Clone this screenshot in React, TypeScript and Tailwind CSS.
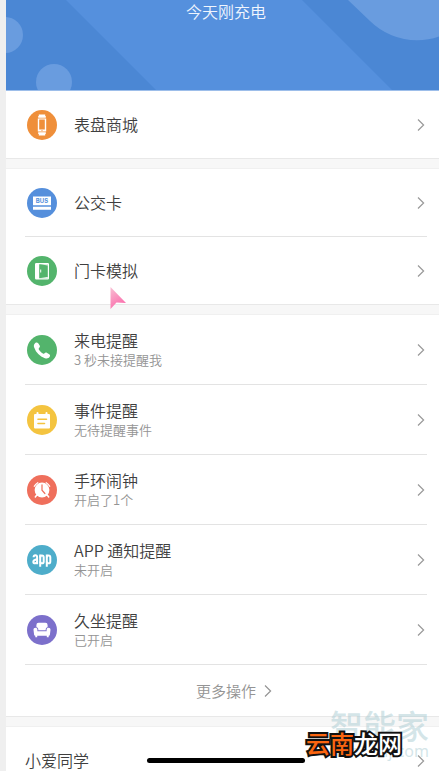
import type { ReactNode } from "react";

function Chevron({ className = "" }: { className?: string }) {
  return (
    <svg viewBox="0 0 8 14" className={`h-3.5 w-2 shrink-0 ${className}`} fill="none" stroke="currentColor" strokeWidth="1.2" aria-hidden="true">
      <path d="M1 1.5 6.6 7 1 12.5" />
    </svg>
  );
}

function Badge({ color, children }: { color: string; children: ReactNode }) {
  return (
    <svg viewBox="0 0 30 30" className={`size-[30px] shrink-0 rounded-full ${color}`} fill="#fff" aria-hidden="true">
      {children}
    </svg>
  );
}

const icons = {
  watch: (
    <Badge color="bg-[#ef8f3a]">
      <path d="M11.8 4.6h6.4V6h.6v1.8h-7.6V6h.6zM11.2 22.2h7.6V24h-.6v1.4h-6.400V24h-.6z" />
      <path d="M10.800 8.400h8.400v13.200h-8.400zM12.200 9.400v10.200h5.600V9.400z" fillRule="evenodd" />
      <circle cx="15" cy="20.600" r=".6" fill="#ef8f3a" />
    </Badge>
  ),
  bus: (
    <Badge color="bg-[#558fdc]">
      <path d="M6 8.400h18v8.800H6zM6 18.800h18v3H6z" />
      <text x="15" y="15.200" textAnchor="middle" fontSize="6" fontWeight="700" fill="#558fdc" fontFamily="Inter, sans-serif">BUS</text>
    </Badge>
  ),
  door: (
    <Badge color="bg-[#53b46c]">
      <path d="M9.200 7h11.600a1.200 1.200 0 0 1 1.200 1.200v14a1.200 1.200 0 0 1-1.200 1.200H9.200A1.200 1.200 0 0 1 8 22.200v-14A1.200 1.200 0 0 1 9.200 7zM12.200 8.200v14h8.600v-14z" fillRule="evenodd" />
      <path d="M12.200 8.200h1.500l7.100 1.300v-1.300h-8.600zM12.200 22.200l8.600-1.200v1.200z" />
      <path d="M13.200 13.400h1v3.200h-1z" />
    </Badge>
  ),
  phone: (
    <Badge color="bg-[#53b46c]">
      <path d="M8.300 7.900c1.100-.8 2.200-.6 2.900.4l1.500 2.300c.5.900.2 1.700-.6 2.400-.6.500-.6 1-.2 1.600 1 1.700 2.300 3 4 4 .6.400 1.100.3 1.600-.3.700-.8 1.500-1 2.300-.5l2.400 1.500c1 .7 1.100 1.700.3 2.800-1.100 1.400-2.600 1.800-4.600 1.100-5.300-1.900-8.800-5.400-10.700-10.700-.7-2-.3-3.500 1.100-4.600z" />
    </Badge>
  ),
  event: (
    <Badge color="bg-[#f4c440]">
      <rect x="7" y="9" width="16" height="14.500" rx="1" />
      <rect x="9.500" y="7" width="2" height="4" rx="1" />
      <rect x="18.500" y="7" width="2" height="4" rx="1" />
      <path d="M11 14.300h8.500M11 18.500h6.500" stroke="#f4c440" strokeWidth="1.600" strokeLinecap="round" />
    </Badge>
  ),
  alarm: (
    <Badge color="bg-[#ef6f5c]">
      <circle cx="15" cy="15" r="7.400" />
      <path d="M7.300 11.300A9 9 0 0 1 10.800 7.700M22.700 11.300A9 9 0 0 0 19.200 7.700" stroke="#fff" strokeWidth="1.300" fill="none" strokeLinecap="round" />
      <path d="m9.800 20-1.500 2M20.200 20l1.500 2" stroke="#fff" strokeWidth="1.500" strokeLinecap="round" />
      <path d="M15 9.800v5.400l2.900 3.300" stroke="#ef6f5c" strokeWidth="1.200" fill="none" strokeLinecap="round" />
    </Badge>
  ),
  app: (
    <Badge color="bg-[#4eadca]">
      <g fill="none" stroke="#fff" strokeWidth="2">
        <path d="M6.600 12.300c0-2.600 3.500-2.600 3.500 0v7" />
        <path d="M10.100 14.200c-2.500.4-3.800 1-3.800 2.700 0 2.200 3.800 1.700 3.800-.7" />
        <path d="M13.200 9.600v12.200M19.800 9.600v12.200" />
        <path d="M13.200 12.500c0-2.600 3.500-2.600 3.500 0v3.900c0 2.600-3.500 2.600-3.500 0M19.800 12.500c0-2.600 3.500-2.600 3.500 0v3.900c0 2.600-3.500 2.600-3.500 0" />
      </g>
    </Badge>
  ),
  sofa: (
    <Badge color="bg-[#7c70cb]">
      <path d="M9.400 12.200V10a2.200 2.200 0 0 1 2.200-2.200h6.800A2.200 2.200 0 0 1 20.600 10v2.200c-1.300.3-1.900 1.100-1.900 2.300v.7h-7.400v-.7c0-1.200-.6-2-1.900-2.300z" />
      <path d="M8.400 12.800c1.300 0 2 .8 2 1.900v1.600h9.200v-1.600c0-1.100.7-1.900 2-1.900 1.200 0 1.900.8 1.900 1.900l-.6 5c-.1.700-.5 1-1.200 1v1.500h-1.900v-1.500h-9.600v1.500H8.300v-1.500c-.7 0-1.100-.3-1.200-1l-.6-5c0-1.100.7-1.900 1.900-1.900z" />
    </Badge>
  ),
};

type Item = { icon?: ReactNode; title: string; note?: string };

function Row({ icon, title, note }: Item) {
  return (
    <div className="border-t border-[#e3e3e3] first:border-t-0">
      <button
        type="button"
        className={`flex w-full items-center gap-[17px] pr-0.5 text-left ${icon ? "pl-0.5" : ""} ${note ? "h-[69px]" : "h-[67px]"}`}
      >
        {icon}
        <span className={`flex-1 ${note ? "" : "pb-0.5"}`}>
          <span className="block text-base leading-5 text-[#3f3f3f]">{title}</span>
          {note && <span className="block text-[13px] leading-5 text-[#949494]">{note}</span>}
        </span>
        <Chevron className="text-[#999]" />
      </button>
    </div>
  );
}

function Group({ items, children }: { items: Item[]; children?: ReactNode }) {
  return (
    <section className="bg-white pr-3 pl-[19px]">
      {items.map((item) => (
        <Row key={item.title} {...item} />
      ))}
      {children}
    </section>
  );
}

function Band() {
  return <div className="h-[11px] border-y border-t-[#e8e8e8] border-b-[#f0f0f0] bg-[#f7f7f7]" />;
}

const cards: Item[] = [
  { icon: icons.bus, title: "公交卡" },
  { icon: icons.door, title: "门卡模拟" },
];

const reminders: Item[] = [
  { icon: icons.phone, title: "来电提醒", note: "3 秒未接提醒我" },
  { icon: icons.event, title: "事件提醒", note: "无待提醒事件" },
  { icon: icons.alarm, title: "手环闹钟", note: "开启了1个" },
  { icon: icons.app, title: "APP 通知提醒", note: "未开启" },
  { icon: icons.sofa, title: "久坐提醒", note: "已开启" },
];

export default function App() {
  return (
    <div className="relative h-screen overflow-hidden bg-[#efefef] pl-1.5 font-['Noto_Sans_CJK_SC',sans-serif] font-[350]">
      <header className="relative h-[91px] overflow-hidden border-b border-[#9dbeea] bg-[#4b87d4] pr-3 pl-[19px]">
        <svg viewBox="0 0 433 90" preserveAspectRatio="xMidYMin slice" className="absolute inset-0 size-full" aria-hidden="true">
          <path d="M60 0h236l90 90H150z" fill="#5590dd" />
          <g fill="#699cdf">
            <circle cx="-1" cy="35" r="18" />
            <circle cx="48" cy="82" r="18" />
            <path d="M342 0 364 21A67 67 0 0 0 458 21V0z" />
          </g>
        </svg>
        <p className="relative pt-px text-center text-base leading-5 text-[#f0f5fd]">今天刚充电</p>
      </header>

      <main>
        <Group items={[{ icon: icons.watch, title: "表盘商城" }]} />
        <Band />
        <Group items={cards} />
        <Band />
        <Group items={reminders}>
          <div className="flex h-[52px] items-center justify-center border-t border-[#e3e3e3]">
            <button type="button" className="relative text-[15px] leading-5 text-[#949494]">
              更多操作
              <Chevron className="absolute top-[3px] left-full ml-2" />
            </button>
          </div>
        </Group>
        <Band />
        <Group items={[{ title: "小爱同学" }]} />
      </main>

      <svg viewBox="0 0 16 22" className="absolute top-[287px] left-[110px] h-[22px] w-4" aria-hidden="true">
        <defs>
          <linearGradient id="pointer" x1="0" y1="0" x2="0.5" y2="1">
            <stop offset="0" stopColor="#f8c0d4" />
            <stop offset="1" stopColor="#fb6cab" />
          </linearGradient>
        </defs>
        <path d="M.5 0 16 16 6.500 15.500.5 22z" fill="url(#pointer)" />
      </svg>

      <div className="absolute right-2.5 bottom-2.5 text-right text-[#a9cbd2]/50">
        <p className="text-[33px] leading-8 font-medium">智能家</p>
        <p className="font-['Noto_Sans',sans-serif] text-base leading-5 font-normal">www.znj.com</p>
      </div>
      <div className="absolute bottom-2 left-[147px] h-[5px] w-[158px] rounded-full bg-black" />
      <p className="absolute right-[37px] bottom-3.5 text-2xl leading-7 font-medium text-white [-webkit-text-stroke:4px_#111] [paint-order:stroke_fill]">
        <span className="text-[#fb6510]">云南</span>龙网
      </p>
    </div>
  );
}
